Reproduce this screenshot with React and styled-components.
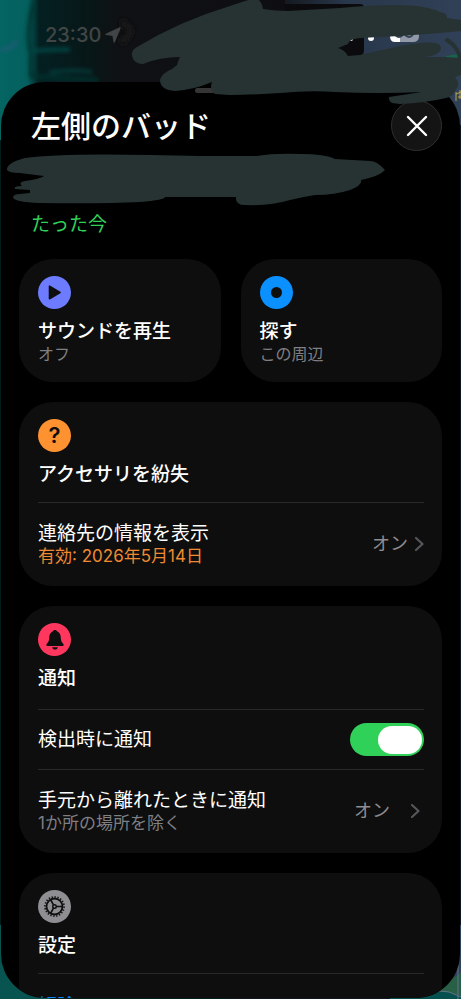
import React, { useState } from 'react';
import styled, { createGlobalStyle } from 'styled-components';

const GlobalStyle = createGlobalStyle`
  * { box-sizing: border-box; }
  body {
    margin: 0;
    background: #000;
    color: #fff;
    font-family: Inter, "Noto Sans CJK JP", sans-serif;
  }
  button { font: inherit; color: inherit; border: 0; background: none; padding: 0; text-align: left; }
  h1, h2, p { margin: 0; }
`;

const Screen = styled.div`
  position: relative;
  display: flex;
  flex-direction: column;
  height: 100vh;
  overflow: hidden;
  padding: 0 1px 1px;
`;

const MapBackdrop = styled.svg`
  position: absolute;
  inset: 0;
  width: 100%;
  height: 100%;
`;

const StatusBar = styled.header`
  position: relative;
  display: flex;
  align-items: center;
  gap: 4px;
  flex: none;
  height: 82px;
  padding: 0 40px 13px 44px;
  color: #414545;
  font-size: 20px;
  font-weight: 500;
  line-height: 24px;
`;

const BatteryLevel = styled.svg`
  margin-left: auto;
`;

const Sheet = styled.main`
  position: relative;
  flex: 1;
  min-height: 0;
  overflow: hidden;
  display: flex;
  flex-direction: column;
  gap: 20px;
  padding: 18px 18px 0;
  background: #000;
  border-radius: 44px;
`;

const Grabber = styled.span`
  position: absolute;
  top: 6px;
  left: 50%;
  width: 72px;
  height: 5px;
  margin-left: -36px;
  border-radius: 3px;
  background: #353535;
`;

const SheetHeader = styled.div`
  display: flex;
  flex-direction: column;
  flex: none;
  gap: 62px;
  padding-bottom: 2px;
`;

const TitleBar = styled.div`
  display: flex;
  align-items: center;
  justify-content: space-between;
  padding-left: 12px;
`;

const Title = styled.h1`
  font-size: 30px;
  font-weight: 500;
  line-height: 40px;
`;

const CloseButton = styled.button`
  display: grid;
  place-items: center;
  width: 51px;
  height: 51px;
  border: 1px solid #303030;
  border-radius: 50%;
  background: #141414;
`;

const Updated = styled.p`
  padding-left: 12px;
  color: #30d158;
  font-size: 19px;
  line-height: 24px;
`;

const Tiles = styled.div`
  display: grid;
  grid-template-columns: 1fr 1fr;
  flex: none;
  gap: 20px;
`;

const Tile = styled.button`
  display: flex;
  flex-direction: column;
  padding: 17px 19px 18px;
  border-radius: 34px;
  background: #0e0e0e;
`;

const Card = styled.section`
  flex: none;
  padding: 0 18px 0 19px;
  border-radius: 34px;
  background: #0e0e0e;
`;

const CardHeader = styled.div`
  padding: 17px 0 ${(p) => (p.$roomy ? 18 : 15)}px;
`;

const Badge = styled.span`
  display: grid;
  place-items: center;
  width: 33px;
  height: 33px;
  margin-bottom: 11px;
  border-radius: 50%;
  background: ${(p) => p.$color};
  color: #0e0e0e;
  font-size: 22px;
  font-weight: 600;
  line-height: 33px;
`;

const Heading = styled.h2`
  font-size: 19px;
  font-weight: 500;
  line-height: 24px;
`;

const Row = styled.div`
  display: flex;
  align-items: center;
  justify-content: space-between;
  width: 100%;
  border-top: 1px solid #292929;
  padding: ${(p) => (p.$last ? 21 : 19)}px 0 20px;
`;

const Texts = styled.span`
  display: flex;
  flex-direction: column;
`;

const Label = styled.span`
  color: ${(p) => p.$color || '#fff'};
  font-size: 19px;
  line-height: 24px;
`;

const SwitchRow = styled.label`
  display: flex;
  align-items: center;
  justify-content: space-between;
  height: 60px;
  border-top: 1px solid #292929;
`;

const Note = styled.span`
  color: ${(p) => p.$color || '#7f7f84'};
  font-size: ${(p) => (p.$small ? 16 : 17)}px;
  line-height: 20px;
`;

const Value = styled.span`
  display: flex;
  align-items: center;
  gap: ${(p) => (p.$wide ? 20 : 6)}px;
  padding-right: ${(p) => (p.$wide ? 4 : 0)}px;
  color: #8e8e93;
  font-size: 18px;
  line-height: 24px;
`;

const Switch = styled.input`
  appearance: none;
  display: flex;
  align-items: center;
  width: 74px;
  height: 33px;
  margin: 0;
  padding: 0 2px;
  border-radius: 17px;
  background: ${(p) => (p.checked ? '#30d158' : '#39393d')};
  &::before {
    content: "";
    width: 44px;
    height: 28px;
    margin-left: ${(p) => (p.checked ? 'auto' : '0')};
    border-radius: 14px;
    background: #fff;
  }
`;

const Scribbles = styled.svg`
  position: absolute;
  top: 0;
  left: 0;
  width: 100%;
  height: auto;
  pointer-events: none;
`;

const Chevron = () => (
  <svg width="10" height="16" viewBox="0 0 10 16" fill="none" stroke="#55555a" strokeWidth="2.2" strokeLinecap="round" strokeLinejoin="round" aria-hidden="true">
    <path d="M2 2l6.5 6L2 14" />
  </svg>
);

const Gear = () => (
  <svg width="23" height="23" viewBox="-11.5 -11.5 23 23" fill="none" stroke="currentColor" aria-hidden="true">
    <circle r="8" strokeWidth="1.8" />
    <circle r="9.6" strokeWidth="1.6" pathLength="100" strokeDasharray="2.2 2.8" />
    <circle r="1.8" strokeWidth="1.4" />
    <path d="M2 0H8M-1-1.7L-4-7M-1 1.7L-4 7" strokeWidth="1.6" />
  </svg>
);

const Bell = () => (
  <svg width="18" height="20" viewBox="0 0 18 20" fill="currentColor" aria-hidden="true">
    <path d="M9 0C7.8 0 7.2.7 7 1.3C4.5 2.2 3.3 4.7 3.2 7.5C3.1 10.8 2.6 11.8 1.2 13.2C.5 14 .2 14.6.3 15.2C.4 15.8.8 16 1.4 16H16.6C17.2 16 17.6 15.8 17.7 15.2C17.8 14.6 17.5 14 16.8 13.2C15.4 11.8 14.9 10.8 14.8 7.5C14.7 4.7 13.5 2.2 11 1.3C10.8.7 10.2 0 9 0ZM6.2 17.2H11.8C11.5 18.6 10.5 19.5 9 19.5S6.5 18.6 6.2 17.2Z" />
  </svg>
);

export default function App() {
  const [notify, setNotify] = useState(true);
  return (
    <>
      <GlobalStyle />
      <Screen>
        <MapBackdrop viewBox="0 0 461 999" preserveAspectRatio="none" aria-hidden="true">
          <defs>
            <linearGradient id="sea" x1="0" x2="1" y1="0" y2="0">
              <stop offset="0" stopColor="#046563" />
              <stop offset=".06" stopColor="#04605e" />
              <stop offset=".085" stopColor="#041f21" />
              <stop offset=".2" stopColor="#081617" />
              <stop offset=".26" stopColor="#101114" />
              <stop offset="1" stopColor="#0b0b0e" />
            </linearGradient>
            <linearGradient id="city" x1="0" x2="1" y1="0" y2="0">
              <stop offset="0" stopColor="#151920" />
              <stop offset=".35" stopColor="#29374b" />
              <stop offset="1" stopColor="#304056" />
            </linearGradient>
            <filter id="soft"><feGaussianBlur stdDeviation="2" /></filter>
          </defs>
          <rect width="461" height="140" fill="url(#sea)" />
          <rect y="140" width="230" height="859" fill="#021b1b" />
          <g filter="url(#soft)" fill="none">
            <path d="M0 50Q14 49 17 40" stroke="#235a78" strokeWidth="3" />
            <path d="M34 4Q26 28 30 51L70 49M31 54V76L98 80" stroke="#05302f" strokeWidth="4" />
            <path d="M32 51Q50 49 70 50M50 72Q75 69 92 72" stroke="#095856" strokeWidth="2" />
            <path d="M120 22Q140 30 120 43" stroke="#131318" strokeWidth="8" />
          </g>
          <rect x="285" width="176" height="125" fill="url(#city)" />
          <path d="M285 4H360Q364 4 364 8V50Q364 56 358 56H285Z" fill="#0b0b0e" />
          <rect x="230" y="125" width="231" height="874" fill="#0c1620" />
          <path d="M0 925H50V999H0Z" fill="#075451" />
          <path d="M405 925H461V999H405Z" fill="#31435b" />
          <path d="M430 999V993L461 973V999Z" fill="#286047" />
          <path d="M390 992H448L461 996V999H390Z" fill="#065150" />
          <path d="M440 991L449 992L461 997M458 960V999" fill="none" stroke="#65718a" />
          <path d="M446 56L458 54V65L446 61Z" fill="#19624c" />
          <path d="M456 92V101M456 94L461 92M458 97H461M460 90V99" stroke="#b8a64c" fill="none" />
        </MapBackdrop>

        <StatusBar>
          <span>23:30</span>
          <svg width="16" height="16" viewBox="0 0 16 16" fill="currentColor" stroke="currentColor" strokeWidth="1.4" strokeLinejoin="round" aria-hidden="true">
            <path d="M15 1L1 7.4L8 8.2L9.2 15Z" />
          </svg>
          <BatteryLevel width="71" height="14" viewBox="0 0 71 14" aria-hidden="true">
            <circle cx="2" cy="11" r="2" fill="#fff" />
            <circle cx="22" cy="10" r="3" fill="#fff" />
            <path d="M45 0H51V14H46Q41 14 41 8V4Q41 0 45 0Z" fill="#fff" />
            <path d="M51 0H66Q70 0 70 5V8Q70 14 64 14H51Z" fill="#9199a8" />
            <circle cx="50" cy="5" r="4" fill="none" stroke="#334052" strokeWidth="2" />
            <circle cx="60" cy="5" r="4" fill="none" stroke="#334052" strokeWidth="2" />
          </BatteryLevel>
        </StatusBar>

        <Sheet>
          <Grabber />
          <SheetHeader>
            <TitleBar>
              <Title>左側のバッド</Title>
              <CloseButton type="button" aria-label="閉じる">
                <svg width="22" height="22" viewBox="0 0 22 22" stroke="#fff" strokeWidth="2.4" strokeLinecap="round" aria-hidden="true">
                  <path d="M2 2L20 20M20 2L2 20" />
                </svg>
              </CloseButton>
            </TitleBar>
            <Updated>たった今</Updated>
          </SheetHeader>

          <Tiles>
            <Tile type="button">
              <Badge $color="#6d7cff">
                <svg width="13" height="15" viewBox="0 0 13 15" fill="currentColor" stroke="currentColor" strokeWidth="1.6" strokeLinejoin="round" aria-hidden="true">
                  <path d="M1.5 1.2V13.8L12 7.5Z" />
                </svg>
              </Badge>
              <Heading as="span">サウンドを再生</Heading>
              <Note $small>オフ</Note>
            </Tile>
            <Tile type="button">
              <Badge $color="#0a91ff">
                <svg width="11" height="11" viewBox="0 0 11 11" fill="currentColor" aria-hidden="true">
                  <circle cx="5.5" cy="5.5" r="5.5" />
                </svg>
              </Badge>
              <Heading as="span">探す</Heading>
              <Note $small>この周辺</Note>
            </Tile>
          </Tiles>

          <Card>
            <CardHeader>
              <Badge $color="#ff9230">?</Badge>
              <Heading>アクセサリを紛失</Heading>
            </CardHeader>
            <Row as="button" type="button">
              <Texts>
                <Label>連絡先の情報を表示</Label>
                <Note $color="#f08a32">有効: 2026年5月14日</Note>
              </Texts>
              <Value>オン<Chevron /></Value>
            </Row>
          </Card>

          <Card>
            <CardHeader $roomy>
              <Badge $color="#ff375f"><Bell /></Badge>
              <Heading>通知</Heading>
            </CardHeader>
            <SwitchRow>
              <Label>検出時に通知</Label>
              <Switch type="checkbox" role="switch" checked={notify} onChange={(e) => setNotify(e.target.checked)} />
            </SwitchRow>
            <Row as="button" type="button">
              <Texts>
                <Label>手元から離れたときに通知</Label>
                <Note>1か所の場所を除く</Note>
              </Texts>
              <Value $wide>オン<Chevron /></Value>
            </Row>
          </Card>

          <Card>
            <CardHeader>
              <Badge $color="#8e8e93"><Gear /></Badge>
              <Heading>設定</Heading>
            </CardHeader>
            <Row as="button" type="button" $last>
              <Label $color="#0a84ff">解除</Label>
            </Row>
          </Card>
        </Sheet>

        <Scribbles viewBox="0 0 461 210" aria-hidden="true">
          <g fill="#273333">
            <path d="M132 56Q131 50 137 47Q180 21 230 6L245 1L256-2Q262 1 263 9Q275 11 288 11L340 8Q370 5 396 5Q425 5 440 12Q447 13 447 18L461 20V31L440 33L400 36L360 38Q349 39 348 44L338 48Q345 50 348 56L360 55L400 46Q425 41 436 43Q443 46 440 51Q436 56 425 57L445 57L461 58V75L455 77Q461 85 456 89Q453 97 446 98Q425 103 400 104L392 103Q388 100 389 97L422 92Q380 94 335 92Q310 90 280 93Q250 95 230 95L215 94Q209 89 212 82Q193 90 175 91Q160 90 160 80Q162 73 172 69L177 65Q178 61 180 57Q160 57 143 64Q134 64 132 56Z" />
            <path d="M7 170Q6 163 25 158Q60 153 150 155L200 156H257Q275 153 300 154Q325 154 335 159L370 161Q377 161 385 170Q380 176 361 180Q363 185 350 190Q335 195 315 195Q302 197 290 200Q270 206 245 205Q235 205 236 197H165Q165 200 140 202Q100 204 40 203Q13 202 13 197Q14 194 20 194L30 193V190L15 189Q13 186 22 186Q18 182 25 181Q40 179 44 176L20 173Q9 173 7 170Z" />
          </g>
          <path d="M447 40Q458 47 460 58" fill="none" stroke="#273333" strokeWidth="4" strokeLinecap="round" />
        </Scribbles>
      </Screen>
    </>
  );
}
